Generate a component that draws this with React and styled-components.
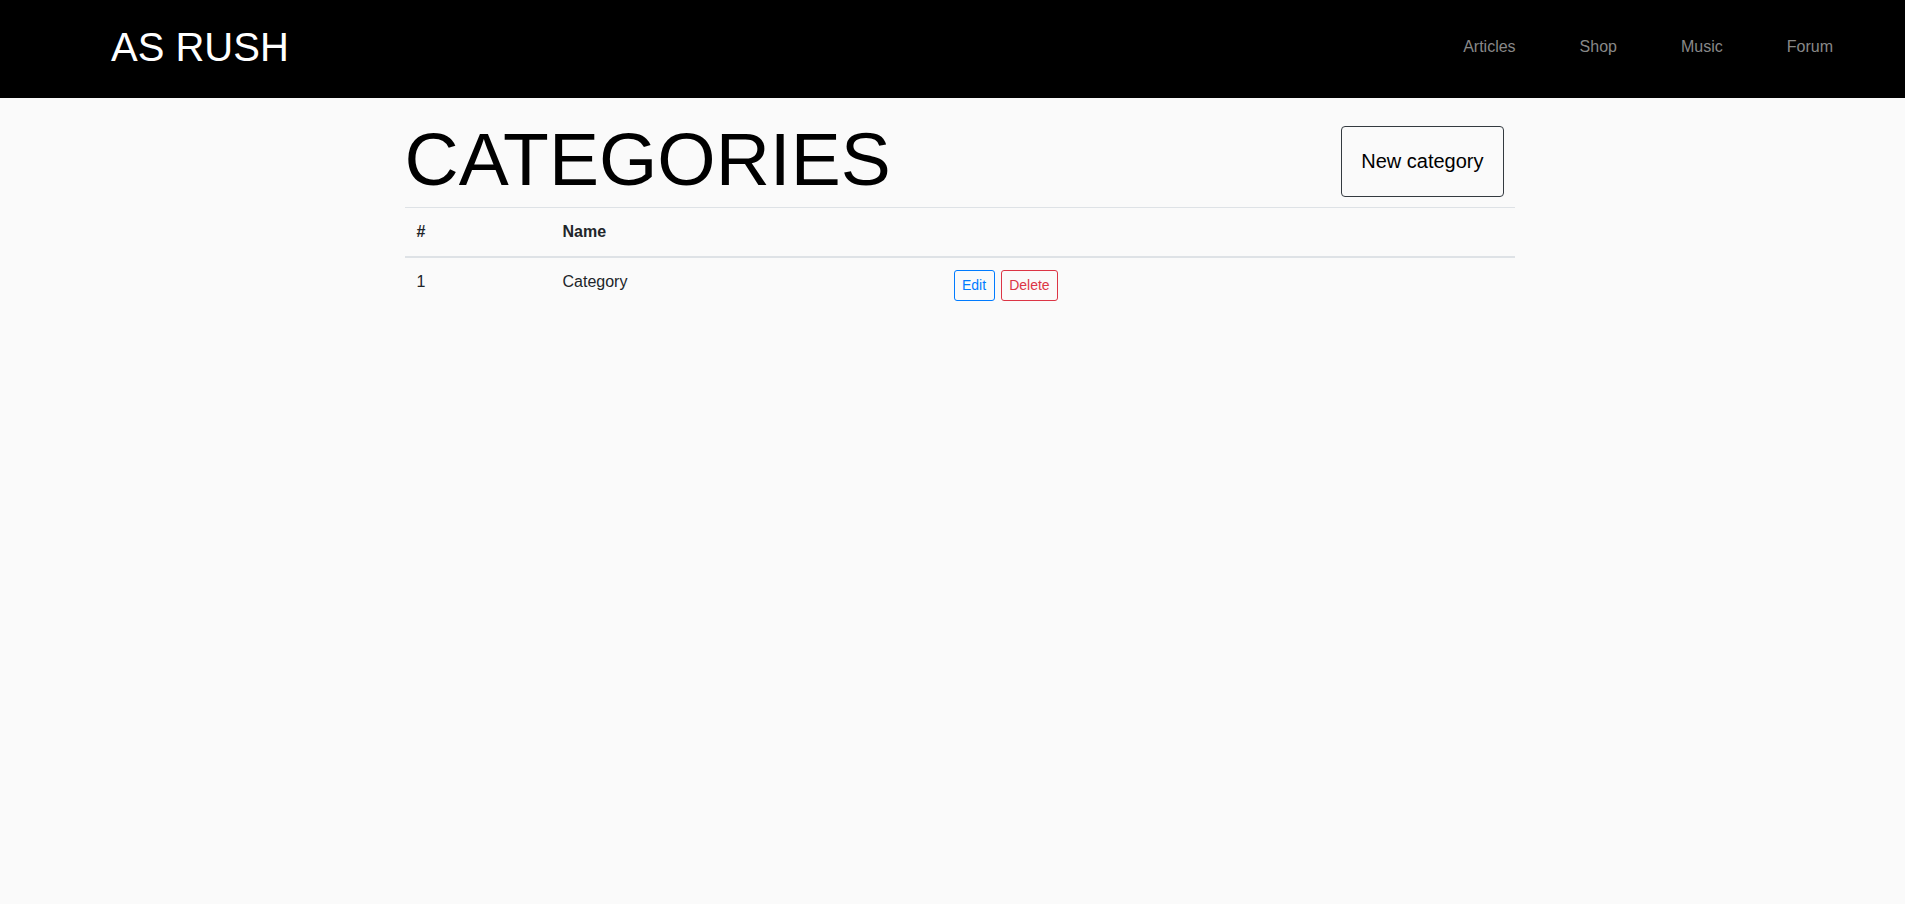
import React from "react";
import styled, { createGlobalStyle } from "styled-components";

const GlobalStyle = createGlobalStyle`
  * {
    box-sizing: border-box;
  }
  body {
    margin: 0;
    background-color: #fafafa;
    font-family: "Liberation Sans", Arial, sans-serif;
    color: #212529;
  }
`;

const categories = [{ id: 1, name: "Category" }];
const links = ["Articles", "Shop", "Music", "Forum"];

function App() {
  return (
    <>
      <GlobalStyle />
      <Navbar>
        <Brand href="#">AS RUSH</Brand>
        <NavList>
          {links.map((l) => (
            <NavLink key={l} href="#">
              {l}
            </NavLink>
          ))}
        </NavList>
      </Navbar>
      <Container>
        <TitleRow>
          <Title>CATEGORIES</Title>
          <NewButton>New category</NewButton>
        </TitleRow>
        <Table>
          <thead>
            <tr>
              <Th width="146px">#</Th>
              <Th width="391px">Name</Th>
              <Th />
            </tr>
          </thead>
          <tbody>
            {categories.map((c) => (
              <tr key={c.id}>
                <Td>{c.id}</Td>
                <Td>{c.name}</Td>
                <Td>
                  <Actions>
                    <SmallButton color="#007bff">Edit</SmallButton>
                    <SmallButton color="#dc3545">Delete</SmallButton>
                  </Actions>
                </Td>
              </tr>
            ))}
          </tbody>
        </Table>
      </Container>
    </>
  );
}

export default App;

const Navbar = styled.nav`
  height: 98px;
  background-color: #000;
  display: flex;
  align-items: center;
  justify-content: space-between;
  padding: 0 40px 4px 111px;
`;
const Brand = styled.a`
  color: #fff;
  font-size: 40px;
  text-decoration: none;
`;
const NavList = styled.div`
  display: flex;
  align-items: center;
`;
const NavLink = styled.a`
  color: #888;
  font-size: 16px;
  padding: 0 32px;
  text-decoration: none;
`;
const Container = styled.main`
  width: 1110px;
  margin-left: calc(50% - 548px);
`;
const TitleRow = styled.div`
  display: flex;
  align-items: center;
  justify-content: space-between;
  padding-top: 16px;
  padding-bottom: 2px;
`;
const Title = styled.h1`
  margin: 0;
  font-size: 75px;
  font-weight: 400;
  line-height: 91px;
  color: #000;
`;
const NewButton = styled.button`
  font-family: inherit;
  font-size: 20px;
  line-height: 1.5;
  color: #000;
  background: transparent;
  border: 1px solid #343a40;
  border-radius: 4px;
  padding: 19px 19px 20px;
  margin-right: 11px;
  margin-top: 3px;
  cursor: pointer;
`;
const Table = styled.table`
  width: 100%;
  border-collapse: collapse;
  font-size: 16px;
  line-height: 24px;
`;
const Th = styled.th`
  width: ${(p) => p.width || "auto"};
  text-align: left;
  font-weight: 700;
  padding: 12px;
  border-top: 1px solid #dee2e6;
  border-bottom: 2px solid #dee2e6;
`;
const Td = styled.td`
  padding: 12px;
  vertical-align: top;
`;
const Actions = styled.div`
  display: flex;
  gap: 6px;
`;
const SmallButton = styled.button`
  font-family: inherit;
  font-size: 14px;
  line-height: 21px;
  padding: 4px 7.5px;
  color: ${(p) => p.color};
  background: transparent;
  border: 1px solid ${(p) => p.color};
  border-radius: 3px;
  cursor: pointer;
`;
